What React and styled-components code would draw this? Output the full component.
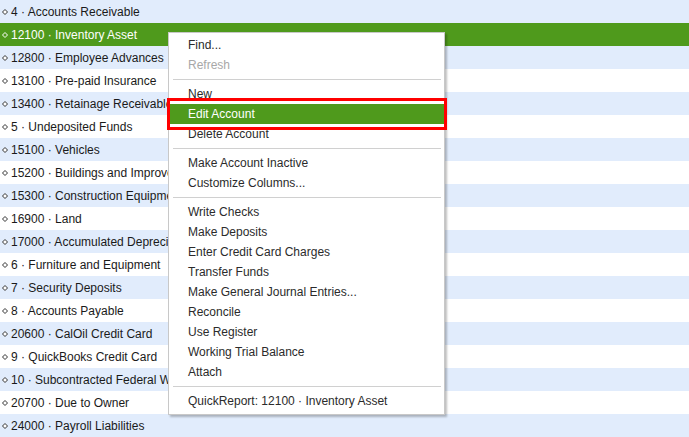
import React from "react";
import styled, { createGlobalStyle } from "styled-components";

const Global = createGlobalStyle`
  html, body { margin: 0; padding: 0; background: #ffffff; }
  body { font-family: "Liberation Sans", Arial, sans-serif; overflow: hidden; }
`;

const Page = styled.div`
  position: relative;
  width: 689px;
  height: 437px;
  overflow: hidden;
`;

const List = styled.div`
  display: flex;
  flex-direction: column;
`;

const Row = styled.div`
  display: flex;
  align-items: center;
  gap: 3px;
  height: 23px;
  padding-left: 2px;
  font-size: 12px;
  color: ${(p) => (p.$selected ? "#ffffff" : "#1a1a1a")};
  background: ${(p) =>
    p.$selected ? "#4f9a1c" : p.$alt ? "#ffffff" : "#e1ecfc"};
  white-space: nowrap;
`;

const Bullet = ({ light }) => (
  <svg width="6" height="6" viewBox="0 0 6 6">
    <path
      d="M3 0.5 L5.5 3 L3 5.5 L0.5 3 Z"
      fill={light ? "#4f9a1c" : "#ffffff"}
      stroke={light ? "#ffffff" : "#333333"}
      strokeWidth="1"
    />
  </svg>
);

const Menu = styled.div`
  position: absolute;
  left: 168px;
  top: 32px;
  width: 275px;
  padding: 2px 0 3px;
  background: #ffffff;
  border: 1px solid #c8c8c8;
  box-shadow: 2px 2px 2px rgba(0, 0, 0, 0.25);
  display: flex;
  flex-direction: column;
  font-size: 12px;
`;

const Item = styled.div`
  height: 20px;
  display: flex;
  align-items: center;
  padding-left: 19px;
  color: ${(p) => (p.$disabled ? "#a8a8a8" : p.$active ? "#ffffff" : "#2b2b2b")};
  background: ${(p) => (p.$active ? "#4f9a1c" : "transparent")};
  white-space: nowrap;
`;

const Sep = styled.div`
  height: 1px;
  margin: 4px 3px 4px 4px;
  background: #d0d0d0;
`;

const Callout = styled.div`
  position: absolute;
  left: 167px;
  top: 98px;
  width: 274px;
  height: 26px;
  border: 3px solid #ff0000;
  pointer-events: none;
`;

const rows = [
  "4 · Accounts Receivable",
  "12100 · Inventory Asset",
  "12800 · Employee Advances",
  "13100 · Pre-paid Insurance",
  "13400 · Retainage Receivable",
  "5 · Undeposited Funds",
  "15100 · Vehicles",
  "15200 · Buildings and Improvements",
  "15300 · Construction Equipment",
  "16900 · Land",
  "17000 · Accumulated Depreciation",
  "6 · Furniture and Equipment",
  "7 · Security Deposits",
  "8 · Accounts Payable",
  "20600 · CalOil Credit Card",
  "9 · QuickBooks Credit Card",
  "10 · Subcontracted Federal Withholding",
  "20700 · Due to Owner",
  "24000 · Payroll Liabilities",
];

const menu = [
  { t: "Find..." },
  { t: "Refresh", disabled: true },
  { sep: true },
  { t: "New" },
  { t: "Edit Account", active: true },
  { t: "Delete Account" },
  { sep: true },
  { t: "Make Account Inactive" },
  { t: "Customize Columns..." },
  { sep: true },
  { t: "Write Checks" },
  { t: "Make Deposits" },
  { t: "Enter Credit Card Charges" },
  { t: "Transfer Funds" },
  { t: "Make General Journal Entries..." },
  { t: "Reconcile" },
  { t: "Use Register" },
  { t: "Working Trial Balance" },
  { t: "Attach" },
  { sep: true },
  { t: "QuickReport: 12100 · Inventory Asset" },
];

export default function App() {
  return (
    <Page>
      <Global />
      <List>
        {rows.map((r, i) => (
          <Row key={i} $selected={i === 1} $alt={i % 2 === 1}>
            <Bullet light={i === 1} />
            <span>{r}</span>
          </Row>
        ))}
      </List>
      <Menu>
        {menu.map((m, i) =>
          m.sep ? (
            <Sep key={i} />
          ) : (
            <Item key={i} $disabled={m.disabled} $active={m.active}>
              {m.t}
            </Item>
          )
        )}
      </Menu>
      <Callout />
    </Page>
  );
}
